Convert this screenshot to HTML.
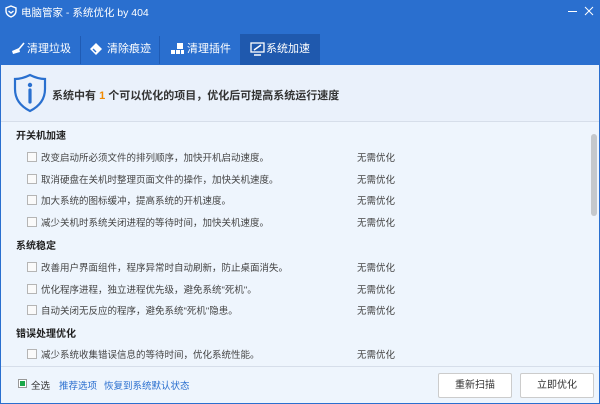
<!DOCTYPE html><html><head><meta charset="utf-8"><style>
*{margin:0;padding:0;box-sizing:border-box}
body{width:600px;height:404px;overflow:hidden;font-family:"Liberation Sans","Noto Sans CJK SC",sans-serif;font-size:10px;color:#333;position:relative;background:#eef5fd}
.hdr{position:absolute;left:0;top:0;width:600px;height:65px;background:#2a6fcf}
.title{position:absolute;left:21px;top:5px;color:#fff;font-size:10.5px;white-space:nowrap}
.tab{position:absolute;top:34px;height:31px;line-height:30px;color:#fff;font-size:11px;white-space:nowrap}
.tab.act{background:#1f59ae;}
.sep{position:absolute;top:36px;width:1px;height:28px;background:#1f5bb4}
.info{position:absolute;left:1px;top:65px;width:598px;height:57px;background:#eaf1fb;border-bottom:1px solid #d6deea}
.info .t{position:absolute;left:51px;top:22px;font-size:11px;font-weight:bold;color:#333}
.frame{position:absolute;left:0;top:65px;width:600px;height:339px;border:1px solid #2a6fcf;border-top:none}
.h{position:absolute;left:16px;font-size:10px;font-weight:bold;color:#222}
.r{position:absolute;left:27px;font-size:9.5px;color:#444;white-space:nowrap}
.r i{display:inline-block;width:10px;height:10px;border:1px solid #b5b5b5;background:#fafafa;vertical-align:-1px;margin-right:4px}
.n{position:absolute;left:357px;font-size:9.5px;color:#444}
.foot{position:absolute;left:1px;top:366px;width:598px;height:37px;border-top:1px solid #d6deea;background:#eef5fd}
.btn{position:absolute;top:6px;width:74px;height:25px;background:#fff;border:1px solid #ccc;border-radius:2px;text-align:center;line-height:23px;font-size:10px;color:#333}
a{color:#2a6fcf;text-decoration:none}
</style></head><body>
<div class="hdr">
<svg style="position:absolute;left:5px;top:5px" width="12" height="13" viewBox="0 0 12 13"><path d="M6 1 L11 3 L11 6 C11 9 8.5 11 6 12 C3.5 11 1 9 1 6 L1 3Z" fill="none" stroke="#fff" stroke-width="1.4"/><path d="M3.5 6 L6 8 L8.5 6" fill="none" stroke="#fff" stroke-width="1.3"/></svg>
<div class="title">电脑管家 - 系统优化 by 404</div>
<div style="position:absolute;left:568px;top:11px;width:9px;height:1px;background:#fff"></div>
<svg style="position:absolute;left:584px;top:6px" width="10" height="10"><path d="M1 1L9 9M9 1L1 9" stroke="#fff" stroke-width="1"/></svg>
<div class="tab" style="left:27px">清理垃圾</div>
<svg style="position:absolute;left:10px;top:42px" width="16" height="14"><path d="M2 9 L9 6 L10 10 L3 12Z" fill="#fff"/><path d="M9 7 L14 1" stroke="#fff" stroke-width="1.6"/></svg>
<div class="sep" style="left:80px"></div>
<div class="tab" style="left:107px">清除痕迹</div>
<svg style="position:absolute;left:89px;top:42px" width="14" height="14"><path d="M7 1 L13 7 L7 13 L1 7Z" fill="#fff"/><path d="M4 7 L7 10" stroke="#2a6fcf" stroke-width="1.4"/></svg>
<div class="sep" style="left:159px"></div>
<div class="tab" style="left:187px">清理插件</div>
<svg style="position:absolute;left:170px;top:42px" width="14" height="14"><rect x="1" y="8" width="4" height="4" fill="#fff"/><rect x="6" y="8" width="4" height="4" fill="#fff"/><rect x="7" y="1" width="6" height="6" fill="#fff"/><rect x="11" y="8" width="3" height="4" fill="#fff"/></svg>
<div class="tab act" style="left:240px;width:80px;padding-left:26px">系统加速</div>
<svg style="position:absolute;left:250px;top:42px" width="15" height="14"><rect x="1" y="1" width="13" height="9" fill="none" stroke="#fff" stroke-width="1.3"/><path d="M4 8 L11 3" stroke="#fff" stroke-width="1.5"/><path d="M4 13 H11" stroke="#fff" stroke-width="1.5"/></svg>
</div>
<div class="info">
<svg style="position:absolute;left:12px;top:8px" width="34" height="40" viewBox="0 0 34 40"><path d="M17 2 C23 5 28 6 32 6 L32 16 C32 27 25 34 17 38 C9 34 2 27 2 16 L2 6 C6 6 11 5 17 2Z" fill="none" stroke="#2a70cf" stroke-width="2.2"/><circle cx="17" cy="12" r="2.2" fill="#2a70cf"/><path d="M17 17 V29" stroke="#2a70cf" stroke-width="3.2" stroke-linecap="round"/></svg>
<div class="t">系统中有 <span style="color:#f08a00">1</span> 个可以优化的项目，优化后可提高系统运行速度</div>
</div>
<div class="frame"></div>
<div style="position:absolute;left:591px;top:134px;width:6px;height:82px;background:#c4c8cc;border-radius:3px"></div>
<div class="h" style="top:127px">开关机加速</div>
<div class="r" style="top:150px"><i></i>改变启动所必须文件的排列顺序，加快开机启动速度。</div><div class="n" style="top:150px">无需优化</div>
<div class="r" style="top:172px"><i></i>取消硬盘在关机时整理页面文件的操作，加快关机速度。</div><div class="n" style="top:172px">无需优化</div>
<div class="r" style="top:193px"><i></i>加大系统的图标缓冲，提高系统的开机速度。</div><div class="n" style="top:193px">无需优化</div>
<div class="r" style="top:215px"><i></i>减少关机时系统关闭进程的等待时间，加快关机速度。</div><div class="n" style="top:215px">无需优化</div>
<div class="h" style="top:237px">系统稳定</div>
<div class="r" style="top:260px"><i></i>改善用户界面组件，程序异常时自动刷新，防止桌面消失。</div><div class="n" style="top:260px">无需优化</div>
<div class="r" style="top:282px"><i></i>优化程序进程，独立进程优先级，避免系统"死机"。</div><div class="n" style="top:282px">无需优化</div>
<div class="r" style="top:303px"><i></i>自动关闭无反应的程序，避免系统"死机"隐患。</div><div class="n" style="top:303px">无需优化</div>
<div class="h" style="top:325px">错误处理优化</div>
<div class="r" style="top:347px"><i></i>减少系统收集错误信息的等待时间，优化系统性能。</div><div class="n" style="top:347px">无需优化</div>
<div class="foot">
<div style="position:absolute;left:17px;top:12px;width:9px;height:9px;border:1px solid #999;background:#fff"><div style="margin:1px;width:5px;height:5px;background:#1aa84a"></div></div>
<div style="position:absolute;left:30px;top:11px;font-size:9.5px">全选</div>
<a style="position:absolute;left:58px;top:11px;font-size:9.5px">推荐选项</a>
<a style="position:absolute;left:103px;top:11px;font-size:9.5px">恢复到系统默认状态</a>
<div class="btn" style="left:437px">重新扫描</div>
<div class="btn" style="left:519px">立即优化</div>
</div>
</body></html>
